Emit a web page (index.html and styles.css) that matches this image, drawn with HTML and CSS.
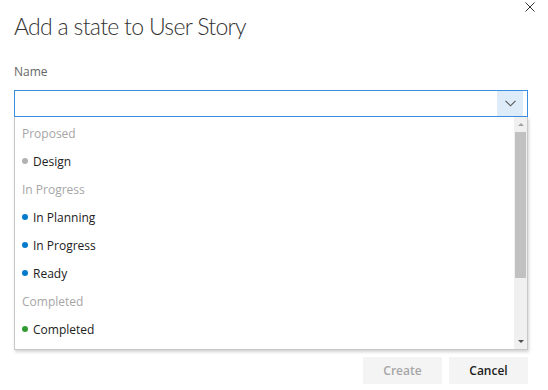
FILE: index.html
```html
<!DOCTYPE html>
<html lang="en">
<head>
    <meta charset="UTF-8">
    <meta name="viewport" content="width=device-width, initial-scale=1.0">
    <title>Add a state</title>
    <link rel="stylesheet" href="styles.css">
</head>
<body>
    <div class="dialog">
        <button class="close" aria-label="Close">
            <svg width="10" height="10" viewBox="0 0 10 10">
                <path d="M0.5 0.5 L9.5 9.5 M9.5 0.5 L0.5 9.5" stroke="#333" stroke-width="1" fill="none"/>
            </svg>
        </button>

        <h1 class="title">Add a state to User Story</h1>

        <label class="field-label" for="state-name">Name</label>
        <div class="combo">
            <input class="combo-input" id="state-name" type="text">
            <span class="combo-toggle">
                <svg width="11" height="7" viewBox="0 0 11 7">
                    <path d="M0.5 0.8 L5.5 5.8 L10.5 0.8" stroke="#555" stroke-width="1.1" fill="none"/>
                </svg>
            </span>
        </div>

        <div class="dropdown">
            <ul class="options">
                <li class="group">Proposed</li>
                <li class="option"><span class="dot dot-proposed"></span>Design</li>
                <li class="group">In Progress</li>
                <li class="option"><span class="dot dot-progress"></span>In Planning</li>
                <li class="option"><span class="dot dot-progress"></span>In Progress</li>
                <li class="option"><span class="dot dot-progress"></span>Ready</li>
                <li class="group">Completed</li>
                <li class="option"><span class="dot dot-completed"></span>Completed</li>
            </ul>
            <div class="scrollbar">
                <span class="scroll-btn"><span class="arrow-up"></span></span>
                <div class="track"><div class="thumb"></div></div>
                <span class="scroll-btn"><span class="arrow-down"></span></span>
            </div>
        </div>

        <div class="actions">
            <button class="btn btn-disabled" disabled>Create</button>
            <button class="btn">Cancel</button>
        </div>
    </div>
</body>
</html>
```

FILE: styles.css
```css
body {
    margin: 0;
    background: #ffffff;
    font-family: 'Segoe UI', 'Open Sans', sans-serif;
    color: #212121;
}

.dialog {
    position: relative;
    width: 548px;
    height: 390px;
    padding: 10px 20px 0 14px;
    box-sizing: border-box;
}

.close {
    position: absolute;
    top: 2px;
    left: 525px;
    padding: 0;
    border: none;
    background: none;
    line-height: 0;
    cursor: pointer;
}

.title {
    margin: 0;
    font-family: 'Segoe UI', Lato, sans-serif;
    font-size: 23px;
    font-weight: 300;
    letter-spacing: -0.7px;
    line-height: 32px;
    color: #333333;
}

.field-label {
    display: block;
    margin-top: 21px;
    font-size: 12px;
    line-height: 18px;
    color: #666666;
}

.combo {
    display: flex;
    margin-top: 9px;
    height: 27px;
    border: 1px solid #3a8ee0;
    box-sizing: border-box;
}

.combo-input {
    flex: 1;
    min-width: 0;
    border: none;
    outline: none;
    padding: 0 8px;
    font: inherit;
    font-size: 12px;
}

.combo-toggle {
    display: flex;
    align-items: center;
    justify-content: center;
    width: 26px;
    margin-right: 4px;
    background: #deecf9;
}

.dropdown {
    display: flex;
    height: 233px;
    border: 1px solid #c8c8c8;
    border-top: none;
    box-sizing: border-box;
    box-shadow: 1px 2px 3px rgba(0, 0, 0, 0.18);
    overflow: hidden;
}

.options {
    flex: 1;
    margin: 0;
    padding: 2px 0 0;
    list-style: none;
    font-size: 12px;
}

.options li {
    display: flex;
    align-items: center;
    height: 28px;
    padding-left: 7px;
}

.group {
    color: #a6a6a6;
}

.option {
    color: #212121;
}

.dot {
    width: 6px;
    height: 6px;
    border-radius: 50%;
    margin-right: 5px;
    flex-shrink: 0;
}

.dot-proposed { background: #b2b2b2; }
.dot-progress { background: #007acc; }
.dot-completed { background: #339933; }

.scrollbar {
    display: flex;
    flex-direction: column;
    width: 13px;
    background: #f0f0f0;
}

.scroll-btn {
    display: flex;
    align-items: center;
    justify-content: center;
    height: 15px;
}

.arrow-up {
    border-left: 3px solid transparent;
    border-right: 3px solid transparent;
    border-bottom: 3px solid #a3a3a3;
}

.arrow-down {
    border-left: 3px solid transparent;
    border-right: 3px solid transparent;
    border-top: 3px solid #505050;
}

.track {
    flex: 1;
    padding: 0 1px;
}

.thumb {
    height: 146px;
    background: #c1c1c1;
}

.actions {
    display: flex;
    justify-content: flex-end;
    gap: 7px;
    margin-top: 7px;
}

.btn {
    width: 79px;
    height: 27px;
    border: none;
    background: #f4f4f4;
    font-family: inherit;
    font-size: 12px;
    font-weight: 600;
    color: #212121;
    cursor: pointer;
}

.btn-disabled {
    color: #a6a6a6;
    cursor: default;
}
```
